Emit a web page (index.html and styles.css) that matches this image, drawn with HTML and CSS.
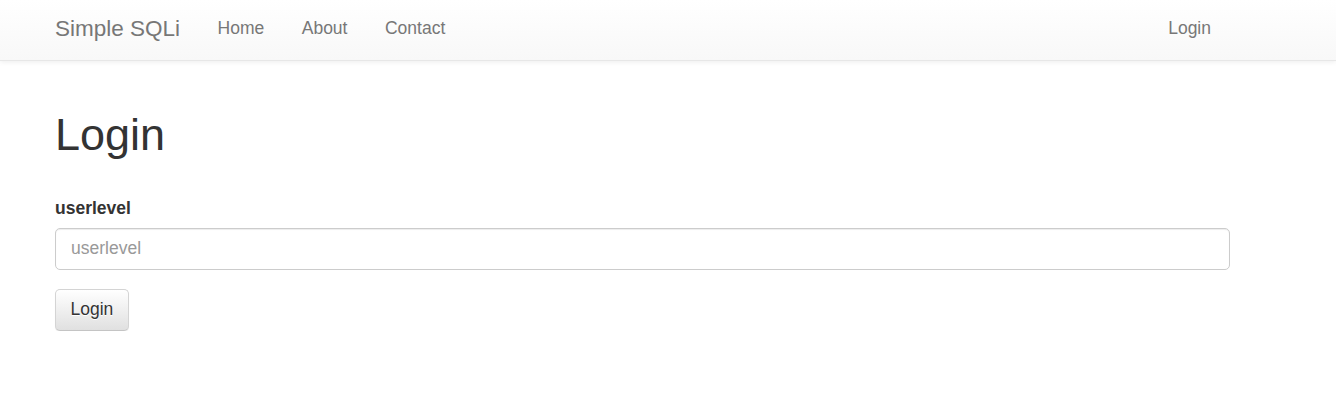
FILE: index.html
```html
<!DOCTYPE html>
<html>
<head>
<meta charset="utf-8">
<title>Simple SQLi</title>
<link rel="stylesheet" href="styles.css">
</head>
<body>
<nav class="navbar">
  <div class="container nav-inner">
    <a class="brand" href="#">Simple SQLi</a>
    <ul class="nav">
      <li><a href="#">Home</a></li>
      <li><a href="#">About</a></li>
      <li><a href="#">Contact</a></li>
    </ul>
    <ul class="nav nav-right">
      <li><a href="#">Login</a></li>
    </ul>
  </div>
</nav>
<main class="container">
  <h1 class="title">Login</h1>
  <form class="form">
    <div class="form-group">
      <label class="label" for="userlevel">userlevel</label>
      <input class="input" id="userlevel" type="text" placeholder="userlevel">
    </div>
    <button class="btn" type="button">Login</button>
  </form>
</main>
</body>
</html>
```
FILE: styles.css
```css
* { box-sizing: border-box; }
html, body { margin: 0; padding: 0; }
body {
  font-family: "Liberation Sans", Arial, sans-serif;
  font-size: 17.5px;
  line-height: 1.42857;
  color: #333;
  background: #fff;
}
.container {
  width: 1175px;
  margin-left: 55px;
}
.navbar {
  height: 61px;
  background-image: linear-gradient(to bottom, #fff 0, #f8f8f8 100%);
  border-bottom: 1px solid #e7e7e7;
  box-shadow: inset 0 1px 0 rgba(255,255,255,.15), 0 1px 5px rgba(0,0,0,.075);
}
.nav-inner {
  display: flex;
  height: 60px;
}
.brand {
  font-size: 22.5px;
  line-height: 25px;
  padding: 15.5px 18.75px 0 0;
  color: #777;
  text-decoration: none;
}
.nav {
  list-style: none;
  margin: 0;
  padding: 0;
  display: flex;
}
.nav a {
  display: block;
  padding: 16px 18.75px 0;
  line-height: 25px;
  color: #777;
  text-decoration: none;
  text-shadow: 0 1px 0 rgba(255,255,255,.25);
}
.nav-right {
  margin-left: auto;
}
.nav-right a {
  padding-right: 19px;
}
.title {
  font-size: 45px;
  font-weight: 500;
  line-height: 1.1;
  margin: 49px 0 0;
  color: #333;
}
.form {
  margin-top: 36px;
}
.form-group {
  margin-bottom: 19px;
}
.label {
  display: block;
  font-weight: bold;
  line-height: 25px;
  margin-bottom: 7px;
}
.input {
  display: block;
  width: 100%;
  height: 42px;
  padding: 7.5px 15px;
  font-family: inherit;
  font-size: 17.5px;
  line-height: 25px;
  color: #555;
  background: #fff;
  border: 1px solid #ccc;
  border-radius: 5px;
  box-shadow: inset 0 1px 1px rgba(0,0,0,.075);
}
.input::placeholder { color: #999; }
.btn {
  display: inline-block;
  height: 42px;
  padding: 7.5px 14.5px;
  font-family: inherit;
  font-size: 17.5px;
  line-height: 25px;
  color: #333;
  background-image: linear-gradient(to bottom, #fff 0, #e0e0e0 100%);
  border: 1px solid #ccc;
  border-color: #d4d4d4 #d4d4d4 #c4c4c4;
  border-radius: 5px;
  text-shadow: 0 1px 0 #fff;
  box-shadow: inset 0 1px 0 rgba(255,255,255,.15), 0 1px 1px rgba(0,0,0,.075);
}
```
